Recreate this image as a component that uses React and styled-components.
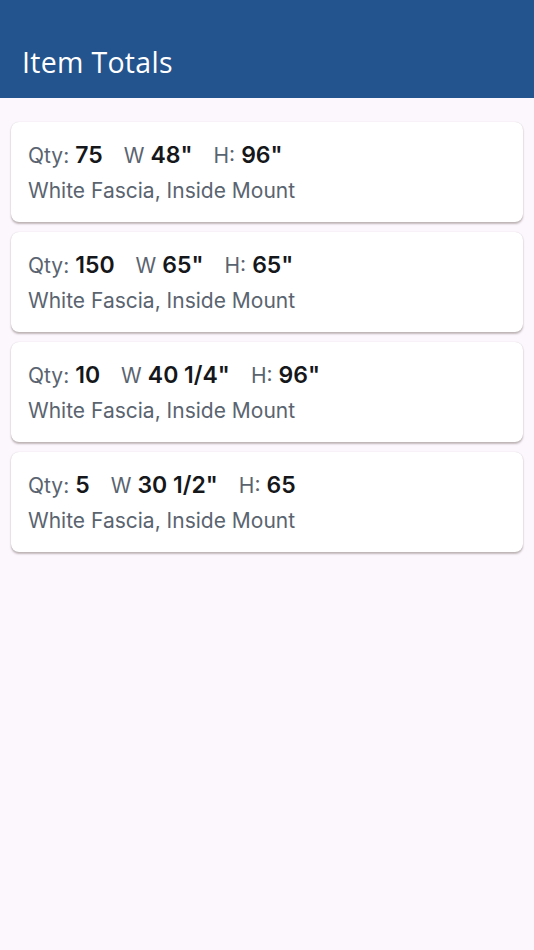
import React from "react";
import styled, { createGlobalStyle } from "styled-components";

const GlobalStyle = createGlobalStyle`
  html, body {
    margin: 0;
    padding: 0;
    background: #fcf6fd;
  }
  body {
    font-family: Inter, "Noto Sans", sans-serif;
  }
`;

const items = [
  { qty: "75", w: '48"', h: '96"' },
  { qty: "150", w: '65"', h: '65"' },
  { qty: "10", w: '40 1/4"', h: '96"' },
  { qty: "5", w: '30 1/2"', h: "65" },
];

const Page = styled.div`
  min-height: 950px;
  background: #fcf6fd;
`;

const Header = styled.header`
  height: 98px;
  background: #24548e;
  display: flex;
  align-items: flex-end;
  padding: 0 22px 17px;
  box-sizing: border-box;
`;

const Title = styled.h1`
  margin: 0;
  color: #ffffff;
  font-family: "Open Sans", Inter, sans-serif;
  font-size: 28.5px;
  font-weight: 500;
  letter-spacing: 0.3px;
`;

const List = styled.div`
  display: flex;
  flex-direction: column;
  gap: 10px;
  padding: 24px 11px;
`;

const Card = styled.div`
  background: #ffffff;
  border-radius: 8px;
  height: 100px;
  box-sizing: border-box;
  padding: 19px 17px 0;
  box-shadow: 0 2px 2px rgba(80, 70, 60, 0.35), 0 0 1px rgba(80, 70, 60, 0.25);
`;

const Row = styled.div`
  display: flex;
  align-items: baseline;
  gap: 21px;
  height: 32px;
`;

const Field = styled.span`
  display: inline-flex;
  align-items: baseline;
  gap: 6px;
`;

const Label = styled.span`
  color: #5a6470;
  font-size: 21px;
`;

const Value = styled.span`
  color: #15171a;
  font-size: 23px;
  font-weight: 600;
`;

const Desc = styled.div`
  margin-top: 5px;
  color: #5a6470;
  font-size: 21px;
`;

export default function App() {
  return (
    <Page>
      <GlobalStyle />
      <Header>
        <Title>Item Totals</Title>
      </Header>
      <List>
        {items.map((it, i) => (
          <Card key={i}>
            <Row>
              <Field>
                <Label>Qty:</Label>
                <Value>{it.qty}</Value>
              </Field>
              <Field>
                <Label>W</Label>
                <Value>{it.w}</Value>
              </Field>
              <Field>
                <Label>H:</Label>
                <Value>{it.h}</Value>
              </Field>
            </Row>
            <Desc>White Fascia, Inside Mount</Desc>
          </Card>
        ))}
      </List>
    </Page>
  );
}
